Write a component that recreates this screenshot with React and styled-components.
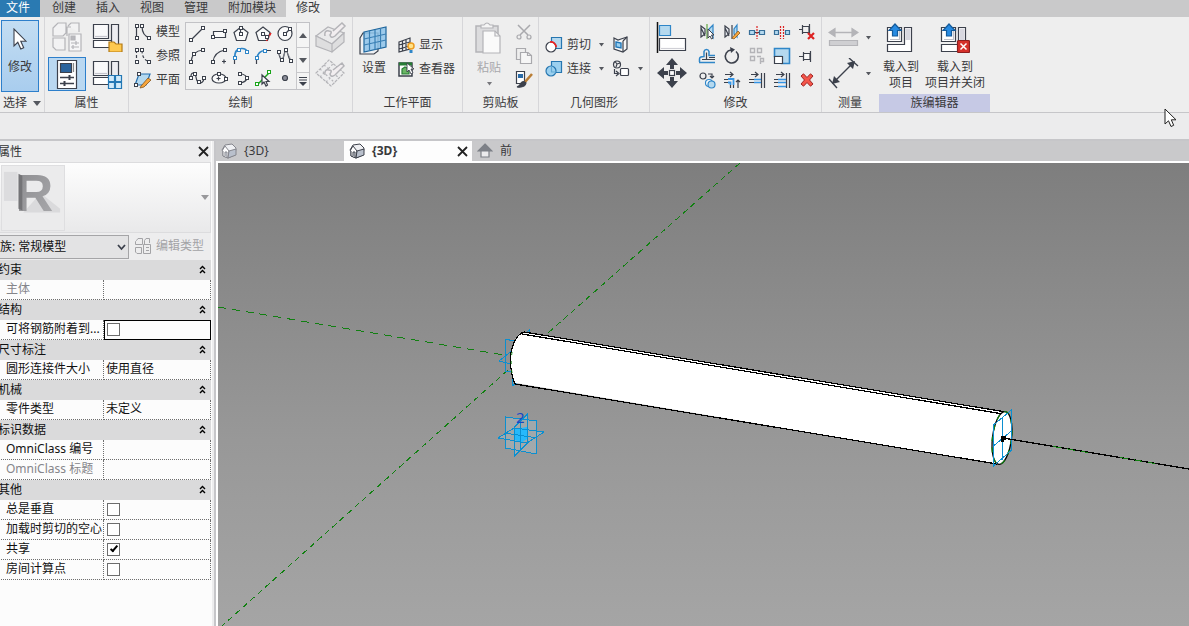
import React from "react";
import styled, { createGlobalStyle, css } from "styled-components";

const INK = "#3c414c";
const BLUE = "#2f86c8";
const SKY = "#b5d9ef";
const FADE = "#b4b4b8";

const GlobalStyle = createGlobalStyle`
  *, *::before, *::after { box-sizing: border-box; }
  body {
    margin: 0;
    overflow: hidden;
    background: #ececed;
    color: #3a3a3c;
    font: 12px/16px "Noto Sans", "Noto Sans CJK SC", sans-serif;
  }
  button, select, input { font: inherit; color: inherit; margin: 0; }
  button { border: 0; padding: 0; background: none; }
`;

const Shell = styled.div`
  height: 100vh;
  display: flex;
  flex-direction: column;
`;

const MenuBar = styled.nav`
  flex: none;
  display: flex;
  height: 17px;
  background: #c9c9ca;
`;

const MenuTab = styled.button`
  height: 17px;
  padding: 0 10px;
  line-height: 15px;
  padding-bottom: 2px;
  background: ${(p) => (p.$active ? "#eeeeee" : "transparent")};
  ${(p) =>
    p.$file &&
    css`
      padding-left: 6px;
      margin-right: 2px;
      background: #2a7ab2;
      color: #fff;
    `}
`;

const Ribbon = styled.div`
  flex: none;
  display: flex;
  height: 96px;
  background: #eeeeee;
  border-bottom: 1px solid #c6c6c9;
`;

const Panel = styled.section`
  flex: none;
  width: ${(p) => p.$width}px;
  display: flex;
  flex-direction: column;
  border-right: 1px solid ${(p) => (p.$last ? "transparent" : "#d6d6d9")};
`;

const PanelBody = styled.div`
  flex: 1;
  min-height: 0;
  display: flex;
  gap: ${(p) => p.$gap || 0}px;
  padding: ${(p) => p.$pad || "3px 4px 0"};
`;

const PanelTitle = styled.h2`
  margin: 0;
  height: 18px;
  display: flex;
  align-items: center;
  justify-content: center;
  gap: 6px;
  font-size: 12px;
  font-weight: 400;
  background: ${(p) => (p.$accent ? "#c6c9e5" : "transparent")};
`;

const Column = styled.div`
  display: flex;
  flex-direction: column;
  align-items: ${(p) => p.$align || "flex-start"};
  gap: ${(p) => p.$gap || 0}px;
  padding-top: ${(p) => p.$top || 0}px;
`;

const BigButton = styled.button`
  display: flex;
  flex-direction: column;
  align-items: center;
  gap: ${(p) => p.$gap || 0}px;
  white-space: nowrap;
  color: ${(p) => (p.disabled ? "#a8a8ac" : "inherit")};
`;

const SelectButton = styled(BigButton)`
  width: 38px;
  height: 72px;
  padding-top: 7px;
  gap: 9px;
  border: 1px solid #2d7fcb;
  background: linear-gradient(#c3ddf2, #a9cdee);
`;

const ToolGrid = styled.div`
  display: grid;
  align-content: start;
  grid-template-columns: repeat(${(p) => p.$cols}, ${(p) => p.$w}px);
  grid-auto-rows: ${(p) => p.$h}px;
  gap: ${(p) => p.$gap || 0}px;
`;

const Tool = styled.button`
  display: flex;
  align-items: center;
  justify-content: center;
  ${(p) =>
    p.$on &&
    css`
      border: 1px solid #2d7fcb;
      background: #bad8f1;
    `}
`;

const RowButton = styled.button`
  display: flex;
  align-items: center;
  gap: 4px;
  height: 24px;
  white-space: nowrap;
`;

const Gallery = styled.div`
  display: flex;
  height: 68px;
  border: 1px solid #c2c2c6;
  background: #f1f1f1;
`;

const GalleryScroll = styled.div`
  width: 13px;
  display: grid;
  grid-template-rows: 25px 25px 16px;
  border-left: 1px solid #c8c8cb;
  background: #f4f4f4;
  button {
    display: flex;
    align-items: center;
    justify-content: center;
    border-bottom: 1px solid #c8c8cb;
  }
  button:last-child { border-bottom: 0; }
`;

const OptionsBar = styled.div`
  flex: none;
  position: relative;
  height: 28px;
  background: #ececed;
  border-bottom: 2px solid #c6c6c9;
`;

const Pointer = styled.svg`
  position: absolute;
  right: 11px;
  top: -5px;
  width: 14px;
  height: 22px;
`;

const Workspace = styled.div`
  flex: 1;
  min-height: 0;
  display: flex;
`;

const Properties = styled.aside`
  flex: none;
  width: 216px;
  margin-left: -2px;
  padding-right: 1px;
  background: #fcfcfc;
  border-right: 2px solid #ededee;
  color: #111;
`;

const PropertiesHeader = styled.header`
  height: 21px;
  display: flex;
  align-items: center;
  justify-content: space-between;
  padding-right: 2px;
  background: #ededee;
  h2 { margin: 0; font-size: 12px; font-weight: 400; color: #333; }
  button { display: flex; }
`;

const TypeSelector = styled.button`
  width: 100%;
  height: 71px;
  display: flex;
  align-items: center;
  justify-content: space-between;
  padding: 0 1px 0 2px;
  border: 1px solid #dcdcde;
  background: linear-gradient(#fdfdfd, #e9e9ea);
`;

const Thumb = styled.svg`
  width: 64px;
  height: 66px;
  overflow: visible;
  background: #ebebec;
  border: 1px solid #dedee0;
`;

const TypeRow = styled.div`
  height: 27px;
  display: flex;
  align-items: center;
  gap: 6px;
  padding-top: 1px;
  background: #ededee;
`;

const FamilyBox = styled.label`
  position: relative;
  width: 131px;
  height: 24px;
  select {
    width: 100%;
    height: 24px;
    padding: 0 16px 0 1px;
    appearance: none;
    border: 1px solid #a5a5a7;
    border-radius: 0;
    background: #e3e3e4;
    color: #111;
  }
  svg { position: absolute; right: 3px; top: 9px; pointer-events: none; }
`;

const EditType = styled.button`
  display: flex;
  align-items: center;
  gap: 5px;
  padding-bottom: 2px;
  color: #a3a3a6;
`;

const Grid = styled.table`
  width: 100%;
  table-layout: fixed;
  border-collapse: separate;
  border-spacing: 0;
  line-height: 16px;
`;

const Category = styled.th`
  height: 20px;
  padding: 0;
  text-align: left;
  font-weight: 400;
  background: #dadadb;
  button {
    width: 100%;
    height: 20px;
    display: flex;
    align-items: center;
    justify-content: space-between;
    padding-right: 5px;
    padding-bottom: 1px;
  }
`;

const NameCell = styled.th`
  width: 106px;
  height: 20px;
  padding: 0 0 2px 8px;
  overflow: hidden;
  white-space: nowrap;
  text-align: left;
  font-weight: 400;
  color: ${(p) => (p.$muted ? "#85858a" : "#111")};
  border-right: 1px dotted #6e6e6e;
  border-bottom: 1px dotted #6e6e6e;
`;

const ValueCell = styled.td`
  height: 20px;
  padding: 0 2px 2px;
  border-right: 1px dotted #6e6e6e;
  border-bottom: 1px dotted #6e6e6e;
  ${(p) =>
    p.$focus &&
    css`
      border: 1px solid #000;
      padding: 0 1px 3px;
    `}
`;

const Check = styled.input`
  appearance: none;
  display: block;
  position: relative;
  width: 13px;
  height: 13px;
  margin-left: 1px;
  margin-top: 2px;
  border: 1px solid #6d6d6d;
  background: #fff;
  &:checked::after {
    content: "";
    position: absolute;
    left: 4px;
    top: 0;
    width: 4px;
    height: 8px;
    border: solid #000;
    border-width: 0 2px 2px 0;
    transform: rotate(40deg);
  }
`;

const ViewArea = styled.main`
  flex: 1;
  min-width: 0;
  display: flex;
  flex-direction: column;
  border-left: 2px solid #c6c6c9;
`;

const ViewTabs = styled.div`
  flex: none;
  display: flex;
  height: 20px;
  background: #c9c9cb;
`;

const ViewTab = styled.div`
  display: flex;
  align-items: center;
  justify-content: space-between;
  width: 128px;
  padding: 0 4px 0 5px;
  background: ${(p) => (p.$active ? "#fdfdfd" : "transparent")};
  font-weight: ${(p) => (p.$active ? 700 : 400)};
  button { display: flex; align-items: center; font-weight: inherit; gap: 7px; }
`;

const Canvas = styled.div`
  flex: 1;
  min-height: 0;
  border-top: 2px solid #fff;
  border-left: 2px solid #fff;
  background: linear-gradient(#7e7e7e, #989898 60%, #a5a5a5);
  svg { display: block; width: 100%; height: 100%; }
`;

/* ---------- icon helpers ---------- */

const Svg = ({ w = 18, h = w, children }) => (
  <svg width={w} height={h} viewBox={`0 0 ${w} ${h}`} fill="none" stroke={INK} strokeWidth="1.2" aria-hidden="true">
    {children}
  </svg>
);

const Nodes = ({ at, color = INK }) =>
  at.map(([x, y]) => (
    <rect key={`${x}-${y}`} x={Math.floor(x) - 1.5} y={Math.floor(y) - 1.5} width="3" height="3" fill="#fff" stroke={color} strokeWidth="1" />
  ));

const Caret = ({ color = "#55585f", up, w = 6 }) => (
  <svg width={w} height={w / 2 + 1} viewBox="0 0 8 5" preserveAspectRatio="none" aria-hidden="true">
    <path d={up ? "M0 5L4 0L8 5Z" : "M0 0H8L4 5Z"} fill={color} />
  </svg>
);

const Close = () => (
  <Svg w={11}>
    <path d="M1 1L10 10M10 1L1 10" stroke="#222" strokeWidth="1.8" />
  </Svg>
);

const DoubleUp = () => (
  <Svg w={7} h={9}>
    <path d="M1 4L3.500 1.500L6 4M1 8L3.500 5.500L6 8" stroke="#000" strokeWidth="1.4" />
  </Svg>
);

const arrowPath = "M1 1V16L4.500 12.800L7 18.500L9.700 17.300L7.300 11.800H12Z";

/* ---------- draw gallery ---------- */

const drawTools = [
  ["直线", <><path d="M3 15L15 3" /><Nodes at={[[3, 15], [15, 3]]} /></>],
  ["矩形", <><path d="M3.500 6.500H15.500V12.500H3.500Z" fill="#fafafa" /><Nodes at={[[3, 12], [15, 6]]} /></>],
  ["内接多边形", <><path d="M9 2L16 7.500L13.500 15.500H4.500L2 7.500Z" fill="#fafafa" /><path d="M8.500 3V9" /><Nodes at={[[9, 3], [9, 9]]} /></>],
  ["外接多边形", <><path d="M9 2L16 7.500L13.500 15.500H4.500L2 7.500Z" fill="#fafafa" /><path d="M9 9L13 11.500" /><path d="M17 8L12.500 16" stroke="#e32222" strokeWidth="1.5" strokeDasharray="3 1" /><Nodes at={[[9, 9], [13, 12]]} /></>],
  ["圆形", <><circle cx="9" cy="8.500" r="7" fill="#fafafa" /><path d="M9 9L14 4" /><Nodes at={[[9, 9], [14, 4]]} /></>],
  ["起点终点半径弧", <><path d="M3 15Q4 4 15 3" /><Nodes at={[[3, 15], [6, 7], [15, 3]]} /></>],
  ["圆心端点弧", <><path d="M3 15Q4 5 15 3" /><path d="M14 12.500V16.500M12 14.500H16" /><Nodes at={[[3, 15], [15, 3]]} /></>],
  ["相切端点弧", <><path d="M3 11C2 4 6 1.500 9 1.500Q14 1 15.500 5" stroke={BLUE} strokeWidth="1.600" /><path d="M2.500 13V17" /><Nodes color={BLUE} at={[[3, 11], [7, 3], [15, 5]]} /></>],
  ["圆角弧", <><path d="M3 11Q4 4 11 3.500" stroke={BLUE} strokeWidth="1.600" /><path d="M2.500 13V17M13 3.500H17" /><Nodes color={BLUE} at={[[3, 11], [11, 4]]} /></>],
  ["样条曲线", <><path d="M2 5C4 9 4 13 6 13C8 12 8 4 10 3C12 4 12 13 16 15" /><path d="M2 5L6 13L10 3L16 15" stroke="#8a8d96" strokeWidth=".8" /><Nodes at={[[3, 5], [6, 13], [10, 3], [15, 14]]} /></>],
  ["通过点的样条曲线", <><path d="M3 10C2 2 7 3 8 8C9 15 14 16 16 10" /><Nodes at={[[3, 9], [7, 5], [11, 13], [16, 9]]} /></>],
  ["椭圆", <><ellipse cx="9" cy="9.500" rx="7" ry="4.500" fill="#fafafa" /><path d="M8.500 7.500V11.500M6.500 9.500H10.500" /><Nodes at={[[9, 5], [16, 10]]} /></>],
  ["半椭圆", <><path d="M8 4.500Q15 6 15 9.500Q14 13 8 14" /><Nodes at={[[8, 5], [15, 9], [8, 14]]} /></>],
  ["拾取线", <><path d="M3 16L16 3" stroke="#1aa51a" strokeWidth="1.500" /><Nodes color="#1aa51a" at={[[3, 15], [15, 3]]} /><path d="M8 6V15L10 13L12 17L13.500 16L12 12.500H15Z" fill="#fff" /></>],
  ["点图元", <circle cx="9" cy="9" r="2.500" fill="#8c8e99" />],
];

/* ---------- modify tools ---------- */

const pin = "M1 9.500H6M5.500 5V14M6 6.500H12V12.500H6M12.500 4V15";
const modifyTools = [
  ["镜像-拾取轴", <><path d="M3 3V14L7 11V6ZM3 5L7 13" fill="#e7eaf0" /><path d="M9 1V16" stroke="#63a844" /><path d="M15 2V15L11 11V6Z" stroke={BLUE} fill={SKY} /><path d="M10 6V15L12 13L13.500 16L15 15L13.500 12H16Z" fill="#fff" strokeWidth="1" /></>],
  ["镜像-绘制轴", <><path d="M2 3V14L6 11V6ZM2 5L6 13" fill="#e7eaf0" /><path d="M9 2V16" /><path d="M14 2V14L11 11V6Z" stroke={BLUE} fill={SKY} /><path d="M9 15L15 8L17 10L11 16Z" fill="#f7a53a" stroke="#8b5a20" strokeWidth=".8" /></>],
  ["拆分图元", <><path d="M1.500 7.500H6.500V11.500H1.500ZM11.500 7.500H16.500V11.500H11.500Z" fill={SKY} stroke="#376e98" /><path d="M7 9.500H11" /><path d="M9 3V16" stroke="#d22" strokeDasharray="2 1" /></>],
  ["用间隙拆分", <><path d="M1.500 7.500H5.500V11.500H1.500ZM12.500 7.500H16.500V11.500H12.500Z" fill={SKY} stroke="#376e98" /><path d="M7.500 3V16M10.500 3V16" stroke="#d22" strokeDasharray="2 1" /></>],
  ["解锁", <><path d="M1 6.500H5M4.500 2V11M5 3.500H11V9.500H5M11.500 1V12" /><path d="M10 10L16 16M16 10L10 16" stroke="#d22" strokeWidth="2.200" /></>],
  ["偏移", <><path d="M1 15.500H17M1.500 15V12Q1.500 9.500 6 9.500V4.500Q6.500 2.500 8.500 2.500Q10.500 2.500 11 4.500V8.500H17" stroke={BLUE} strokeWidth="1.500" /><path d="M4 12.500H8.500V5.500M4 12.500H17M11 10.500H17" /></>],
  ["旋转", <><path d="M8 3A6.500 6.500 0 1 0 13 4.500" strokeWidth="1.600" /><path d="M7 0L12 2.500L8 6Z" fill={INK} stroke="none" /></>],
  ["阵列", <g stroke={FADE}><path d="M2.500 1.500H6.500V5.500H2.500ZM9.500 1.500H13.500V5.500H9.500ZM2.500 9.500H6.500V13.500H2.500ZM9 9.500H13M12.500 17V11.500H15.500V14.500H12.500" strokeWidth="1.400" /></g>],
  ["缩放", <><path d="M1.500 1.500H16.500V16.500H8.500V9.500H1.500Z" fill={SKY} stroke={BLUE} strokeWidth="1.600" /><path d="M1.500 9.500H9.500V16.500H1.500Z" fill="#fff" /></>],
  ["锁定", <path d={pin} fill="#f8f8f8" />],
  ["复制", <><circle cx="5" cy="5" r="3" /><path d="M10 3H14V6M12 5L14 7L16 5" /><circle cx="11" cy="12" r="3.500" fill="#fff" stroke={BLUE} /><circle cx="13.500" cy="13.500" r="3.500" fill={SKY} stroke={BLUE} /></>],
  ["修剪/延伸为角", <><path d="M2 3.500H10M7 1L10 3.500L7 6M1 8.500H5M1 11.500H5M7.500 14V17M10.500 14V17M15 17V9M13 11L15 9L17 11" /><path d="M5 8H10.500V14M5 11.500H7.500V14" stroke="#3595e6" strokeWidth="1.800" /></>],
  ["修剪/延伸单个图元", <><path d="M3 3.500H10M7 1L10 3.500L7 6M1 8.500H6M1 11.500H6M13.500 2V17M16.500 2V17" /><path d="M6 8.500H13M6 11.500H13" stroke="#3595e6" strokeWidth="1.500" /></>],
  ["修剪/延伸多个图元", <><path d="M3 3.500H11M8 1L11 3.500L8 6M1 8.500H5M1 11.500H5M1 15.500H5M13.500 2V17M16.500 2V17" /><path d="M5 8.500H13M5 11.500H13M5 15.500H13" stroke="#3595e6" strokeWidth="1.600" /></>],
  ["删除", <path d="M3 5L5.500 2.800L9 6.500L12.500 2.800L15 5L11.500 9L15 13L12.500 15.200L9 11.500L5.500 15.200L3 13L6.500 9Z" fill="#f4554a" stroke="#9f2525" strokeWidth="1" />],
];

/* ---------- larger icons ---------- */

const FamilyBase = () => (
  <>
    <path d="M1.500 2.500H16.500V16.500H1.500Z" fill="#f9f9fa" />
    <path d="M19.500 2.500H26.500V24.500H19.500Z" fill="#ededf1" />
    <path d="M1.500 18.500H19.500V25.500H1.500Z" fill="#fff" />
    <path d="M3 14.500H15" stroke="#c4c4cc" />
  </>
);

const propertyTools = [
  ["类型属性", <g stroke={FADE}><path d="M4 4L7 1H15V11L12 14H2V6ZM17 4L20 1H28V10M16 14V5H20M2 16H14V28H5L2 25Z" fill="#f2f2f3" /><path d="M18 12H30V29H18Z" fill="#f6f6f7" /><path d="M20 14H24V18H20Z" fill="#b8b8bd" /><path d="M20 21H28M20 25H28M25 19V23M22 23V27" /></g>],
  ["族类别", <><FamilyBase /><path d="M17 20H22L24 22H30V30H17Z" fill="#ffc94f" stroke="#b57b15" /></>],
  ["属性", <><path d="M6.500 1.500H25.500V29.500H6.500Z" fill="#fff" /><path d="M9.500 4.500H20.500V13.500H9.500Z" fill="#2b649d" /><path d="M22.500 4V13" stroke="#888" /><path d="M9 18.500H23M9 24.500H23" strokeWidth="1.400" /><path d="M18.500 16V21M13.500 22V27" strokeWidth="2" /></>, true],
  ["族类型", <><FamilyBase /><path d="M16.500 16.500H22.500V22.500H16.500ZM23.500 16.500H29.500V22.500H23.500ZM16.500 23.500H22.500V29.500H16.500ZM23.500 23.500H29.500V29.500H23.500Z" fill="#d1eafa" stroke="#2478b5" /></>],
];

const LoadIcon = ({ closing }) => (
  <Svg w={30} h={30}>
    <path d="M1.500 4.500H15.500V18.500H1.500Z" fill="#fff" />
    <path d="M18.500 4.500H25.500V28.500H1.500V21.500H18.500Z" fill="#fff" />
    <path d="M19.500 5.500H24.500V17H19.500Z" fill="#d8d8e0" stroke="none" />
    <path d="M4 16.500H13.500V8" stroke="#c0c0c8" />
    <path d="M9 1L15 7.500H11.500V13H6.500V7.500H3Z" fill="#278be2" stroke="#155b9b" />
    {closing && (
      <>
        <rect x="17.500" y="17.500" width="12" height="12" rx="1" fill="#d5302a" stroke="#8d1e1e" />
        <path d="M20.500 20.500L26.500 26.500M26.500 20.500L20.500 26.500" stroke="#fff" strokeWidth="1.500" />
      </>
    )}
  </Svg>
);

const House = ({ faded }) => (
  <Svg w={16}>
    <g stroke={faded ? "#85868d" : "#3e424c"} strokeWidth="1">
      <path d="M1 7L4 2L11 1L15 5L14 12L7 15L2 13V7Z" fill="#eff0f3" />
      <path d="M1 8L4 3L8 8L7 15L2 13V8" fill="#fff" />
      <path d="M8 8L15 6V12L7 15Z" fill="#b9c0cc" />
      <path d="M4 13V9H6V14" fill="#d8dce3" />
    </g>
  </Svg>
);

const TypeIcon = () => (
  <Svg w={16}>
    <g stroke="#a3a3a6" strokeWidth="1">
      <path d="M1.500 2.500L3 .5H7.500V6.500H.5V3.500ZM9.500 6.500V2.500L11 .5H14.500V5M.5 9.500H6.500V15.500H2L.5 14Z" />
      <path d="M8.500 6.500H15.500V15.500H8.500ZM11 9.500H14M11 12.500H14" />
    </g>
  </Svg>
);

/* ---------- property data ---------- */

const groups = [
  ["约束", [{ name: "主体", muted: true }]],
  ["结构", [{ name: "可将钢筋附着到...", check: false, focus: true }]],
  ["尺寸标注", [{ name: "圆形连接件大小", value: "使用直径" }]],
  ["机械", [{ name: "零件类型", value: "未定义" }]],
  ["标识数据", [{ name: "OmniClass 编号" }, { name: "OmniClass 标题", muted: true }]],
  ["其他", [
    { name: "总是垂直", check: false },
    { name: "加载时剪切的空心", check: false },
    { name: "共享", check: true },
    { name: "房间计算点", check: false },
  ]],
];

function RibbonPanels() {
  return (
    <Ribbon>
      <Panel $width={45}>
        <PanelBody $pad="3px 0 0 1px">
          <SelectButton>
            <Svg w={14} h={22}><path d="M1 1V18L4.800 14.300L7.800 21L10.700 19.700L7.800 13.200H13Z" fill="#fff" strokeWidth="1.100" /></Svg>
            修改
          </SelectButton>
        </PanelBody>
        <PanelTitle>选择<Caret w={8} /></PanelTitle>
      </Panel>

      <Panel $width={84}>
        <PanelBody $pad="3px 0 0 3px">
          <ToolGrid $cols={2} $w={38} $h={34} $gap={3}>
            {propertyTools.map(([name, art, on]) => (
              <Tool key={name} aria-label={name} $on={on}><Svg w={32} h={30}>{art}</Svg></Tool>
            ))}
          </ToolGrid>
        </PanelBody>
        <PanelTitle>属性</PanelTitle>
      </Panel>

      <Panel $width={224}>
        <PanelBody $pad="3px 0 0 5px" $gap={5}>
          <Column>
            <RowButton>
              <Svg><path d="M2.500 3V15M8 3Q8 13 16 15" /><Nodes at={[[3, 3], [3, 15], [8, 3], [15, 15]]} /></Svg>模型
            </RowButton>
            <RowButton>
              <Svg><path d="M2.500 3V15M8 3Q8 13 16 15" strokeDasharray="3 2" /><Nodes at={[[3, 3], [3, 15], [8, 3], [15, 15]]} /></Svg>参照
            </RowButton>
            <RowButton>
              <Svg><path d="M5 3H16L12 14H1Z" fill={SKY} stroke="#246fae" /><path d="M7 15L14 7L17 9L10 16L6 17Z" fill="#f8a63c" stroke="#85571f" strokeWidth=".8" /><Nodes at={[[5, 3], [2, 14]]} /></Svg>平面
            </RowButton>
          </Column>
          <Column $top={2}>
            <Gallery>
              <ToolGrid $cols={5} $w={22} $h={22}>
                {drawTools.map(([name, art]) => (
                  <Tool key={name} aria-label={name}><Svg>{art}</Svg></Tool>
                ))}
              </ToolGrid>
              <GalleryScroll>
                <button aria-label="向上"><Caret up w={8} /></button>
                <button aria-label="向下"><Caret w={8} /></button>
                <button aria-label="更多"><Svg w={8} h={9}><path d="M0 .5H8M0 3H8" /><path d="M0 5H8L4 9Z" fill={INK} stroke="none" /></Svg></button>
              </GalleryScroll>
            </Gallery>
          </Column>
          <Column $top={2} $gap={4}>
            <Tool aria-label="拾取面">
              <Svg w={32}><g stroke={FADE}><path d="M1 14L13 5L29 11L17 22Z" fill="#eaeaeb" /><path d="M1 14V24L17 30V22ZM17 22L29 11V20L17 30Z" fill="#dededf" /><path d="M10 14Q9 8 14 9Q18 9 15 13Q16 17 20 14L30 4L27 1L18 9" fill="#f2eef0" strokeWidth="1.500" /></g></Svg>
            </Tool>
            <Tool aria-label="拾取工作平面">
              <Svg w={32}><g stroke={FADE}><path d="M1 15L14 2L29 15L16 28Z" fill="#ededee" strokeDasharray="3 1" /><path d="M5 11L20 25M9 7L24 20M5 19L18 6M11 24L25 11" strokeDasharray="2 2" /><path d="M10 17Q9 11 14 12Q18 12 15 16Q16 20 20 17L29 8L27 5L18 12" fill="#f2eef0" strokeWidth="1.500" /></g></Svg>
            </Tool>
          </Column>
        </PanelBody>
        <PanelTitle>绘制</PanelTitle>
      </Panel>

      <Panel $width={110}>
        <PanelBody $pad="7px 0 0 6px" $gap={9}>
          <BigButton $gap={4}>
            <Svg w={30} h={32}>
              <path d="M1 14L4 9H19V27L15 30H1Z" fill="#eef0f3" />
              <path d="M5 8L27 3V23L5 28Z" fill="#8dc3ea" fillOpacity=".85" stroke="#1d659c" />
              <path d="M10.500 7V27M16 6V26M21.500 5V25M5 15L27 10M5 21L27 16" stroke="#397fb4" />
            </Svg>
            设置
          </BigButton>
          <Column $top={9}>
            <RowButton>
              <Svg w={17}><path d="M1 5L12 1V12L1 15ZM4.500 4V14M8 3V13M1 8L12 5M1 12L12 9" /><circle cx="13" cy="9" r="3" fill="#ffe38a" stroke="#ee9c20" strokeWidth="1.500" /><path d="M11.500 13H14.500V16H11.500Z" fill={BLUE} stroke="none" /></Svg>显示
            </RowButton>
            <RowButton>
              <Svg w={17}><path d="M1 2H14V15H1Z" fill="#fff" strokeWidth="1.500" /><path d="M1 3H14" stroke="#277d35" strokeWidth="3" /><path d="M4 8L7 6L11 8V13H4Z" fill="#6bb665" stroke="#277d35" /><path d="M9 2V11L11 9L13 13L15 12L13 8H16Z" fill="#fff" strokeWidth=".9" /></Svg>查看器
            </RowButton>
          </Column>
        </PanelBody>
        <PanelTitle>工作平面</PanelTitle>
      </Panel>

      <Panel $width={76}>
        <PanelBody $pad="3px 0 0 12px" $gap={12}>
          <BigButton $gap={6} disabled>
            <Svg w={28} h={34}><g stroke={FADE}><path d="M1 6H23V32H1Z" fill="#dcdcde" strokeWidth="1.500" /><path d="M6 8V5H9Q12 1 15 5H18V8Z" fill="#f5f5f5" /><path d="M8 11H20L25 16V33H8Z" fill="#fafafa" /><path d="M20 11V16H25" /></g></Svg>
            粘贴
            <Caret color="#77777c" w={5} />
          </BigButton>
          <ToolGrid $cols={1} $w={18} $h={24}>
            <Tool aria-label="剪切"><Svg><g stroke="#a9a9ad"><path d="M3 2L13 12M15 2L5 12" strokeWidth="1.500" /><circle cx="4" cy="14" r="2" /><circle cx="14" cy="14" r="2" /></g></Svg></Tool>
            <Tool aria-label="复制"><Svg><g stroke="#a9a9ad"><path d="M1.500 1.500H10.500V12.500H1.500Z" /><path d="M5.500 5.500H13L16.500 8.500V16.500H5.500Z" fill="#f6f6f6" /><path d="M12.500 5V8.500H16" /></g></Svg></Tool>
            <Tool aria-label="匹配类型"><Svg><path d="M1.500 .5H9.500V12.500H1.500Z" fill="#fff" /><path d="M3 3H8V7H3Z" fill="#2a6ba8" stroke="none" /><path d="M10 11L17 3" stroke="#ba7e36" strokeWidth="2.500" /><path d="M2 16Q5 15 6 12Q8 9 11 12Q10 17 2 16Z" fill={INK} /></Svg></Tool>
          </ToolGrid>
        </PanelBody>
        <PanelTitle>剪贴板</PanelTitle>
      </Panel>

      <Panel $width={111}>
        <PanelBody $pad="16px 0 0 6px" $gap={8}>
          <Column>
            <RowButton><Svg w={18}><path d="M6.500 1.500H16.500V12.500H6.500Z" fill={SKY} stroke="#2676b0" /><circle cx="6" cy="11" r="5" fill="#fff" /><path d="M5 6A5 5 0 0 1 11 11" stroke="#e22" strokeWidth="1.600" /></Svg>剪切</RowButton>
            <RowButton><Svg w={18}><path d="M6.500 1.500H16.500V12.500H6.500Z" fill="#9bd0ef" stroke="#2676b0" /><circle cx="6" cy="11" r="5" fill="#9bd0ef" stroke="#2676b0" /><path d="M6.500 6V12H11" stroke="#62a9d4" /></Svg>连接</RowButton>
          </Column>
          <ToolGrid $cols={1} $w={5} $h={24}>
            <Tool aria-label="剪切选项"><Caret w={5} /></Tool>
            <Tool aria-label="连接选项"><Caret w={5} /></Tool>
          </ToolGrid>
          <ToolGrid $cols={1} $w={18} $h={24}>
            <Tool aria-label="拆分面"><Svg><path d="M2 2L6 4L9 3L15 1V13L11 16L2 13Z" fill="#f7f7f7" /><path d="M11 5V16M11 5L15 1" /><path d="M4 6L9 7V12L4 11Z" fill="#9bd0ef" stroke="#2176b7" strokeWidth="1.400" /></Svg></Tool>
            <Tool aria-label="填色"><Svg><circle cx="5" cy="4.500" r="3.500" /><path d="M5 4L3 1.500M5 4L8 3M5 4L4 7" /><path d="M2.500 9V13.500H6M4 11L7 13.500L4 16" /><rect x="8.500" y="8.500" width="8" height="7" rx="1" fill="#fff" /></Svg></Tool>
          </ToolGrid>
          <Column $top={34}><Caret w={5} /></Column>
        </PanelBody>
        <PanelTitle>几何图形</PanelTitle>
      </Panel>

      <Panel $width={172}>
        <PanelBody $pad="3px 0 0 6px" $gap={6}>
          <Column $top={1} $gap={3}>
            <Tool aria-label="对齐">
              <Svg w={32} h={33}><path d="M1.500 1V32" stroke="#111" strokeWidth="1.500" /><path d="M3.500 4.500H14.500V14.500H3.500Z" fill={SKY} stroke={BLUE} /><path d="M3.500 17.500H29.500V29.500H3.500Z" fill="#fff" /><path d="M5 27.500H28" stroke="#d0d0d6" /></Svg>
            </Tool>
            <Tool aria-label="移动">
              <Svg w={32}><path d="M16 1L22 8H18V12H14V8H10ZM31 16L24 10V14H20V18H24V22ZM16 31L10 24H14V20H18V24H22ZM1 16L8 22V18H12V14H8V10Z" fill={INK} stroke="none" /><rect x="13.500" y="13.500" width="5" height="5" fill="#fff" /></Svg>
            </Tool>
          </Column>
          <ToolGrid $cols={5} $w={25} $h={24}>
            {modifyTools.map(([name, art]) => (
              <Tool key={name} aria-label={name}><Svg>{art}</Svg></Tool>
            ))}
          </ToolGrid>
        </PanelBody>
        <PanelTitle>修改</PanelTitle>
      </Panel>

      <Panel $width={57} $last>
        <PanelBody $pad="5px 0 0 6px" $gap={7}>
          <Column $gap={4}>
            <Tool aria-label="对齐尺寸"><Svg w={31} h={32}><g stroke={FADE}><path d="M2 10.500H29" strokeWidth="1.500" /><path d="M1 10.500L7 6.500V14.500ZM30 10.500L24 6.500V14.500Z" fill={FADE} /><path d="M1.500 18.500H29.500V23.500H1.500Z" fill="#cfcfd2" /></g></Svg></Tool>
            <Tool aria-label="测量"><Svg w={31} h={32}><path d="M5 25L26 4M1 21L9 30M21 0L30 8" strokeWidth="1.400" /><path d="M4 26L6 18L12 24ZM27 3L19 5L25 11Z" fill={INK} stroke="none" /></Svg></Tool>
          </Column>
          <Column $top={14} $gap={32}>
            <Caret w={5} /><Caret w={5} />
          </Column>
        </PanelBody>
        <PanelTitle>测量</PanelTitle>
      </Panel>

      <Panel $width={112} $last>
        <PanelBody $pad="6px 1px 0 4px" $gap={6}>
          <BigButton $gap={6}><LoadIcon /><span>载入到<br />项目</span></BigButton>
          <BigButton $gap={6}><LoadIcon closing /><span>载入到<br />项目并关闭</span></BigButton>
        </PanelBody>
        <PanelTitle $accent>族编辑器</PanelTitle>
      </Panel>
    </Ribbon>
  );
}

function PropertyRow({ row }) {
  const isCheck = row.check !== undefined;
  return (
    <tr>
      <NameCell scope="row" $muted={row.muted}>
        {isCheck ? <label htmlFor={row.name}>{row.name}</label> : row.name}
      </NameCell>
      <ValueCell $focus={row.focus}>
        {isCheck ? <Check id={row.name} type="checkbox" defaultChecked={row.check} /> : row.value}
      </ValueCell>
    </tr>
  );
}

function PropertiesPalette() {
  return (
    <Properties>
      <PropertiesHeader>
        <h2>属性</h2>
        <button aria-label="关闭"><Close /></button>
      </PropertiesHeader>
      <TypeSelector aria-label="类型选择器">
        <Thumb viewBox="0 0 64 66" aria-hidden="true">
          <defs>
            <linearGradient id="rFill" x1="0" y1="0" x2="1" y2="1">
              <stop offset="0" stopColor="#8b8b8e" />
              <stop offset="1" stopColor="#a9a9ac" />
            </linearGradient>
          </defs>
          <path d="M2 6H16V36H2Z" fill="#dcdcde" />
          <path d="M22 48L40 28L60 44V48Z" fill="#dadadc" />
          <text x="14" y="46" fontFamily="Liberation Sans, sans-serif" fontWeight="700" fontSize="54" fill="url(#rFill)" stroke="none">R</text>
          <path d="M17 8L21 10V46L17 44Z" fill="#747477" />
        </Thumb>
        <Caret color="#98989b" w={8} />
      </TypeSelector>
      <TypeRow>
        <FamilyBox>
          <select aria-label="族"><option>族: 常规模型</option></select>
          <Svg w={9} h={7}><path d="M1 1L4.500 5L8 1" strokeWidth="1.800" /></Svg>
        </FamilyBox>
        <EditType disabled><TypeIcon />编辑类型</EditType>
      </TypeRow>
      <Grid>
        <colgroup><col width="106" /><col /></colgroup>
        {groups.map(([title, rows]) => (
          <tbody key={title}>
            <tr><Category colSpan={2}><button>{title}<DoubleUp /></button></Category></tr>
            {rows.map((row) => <PropertyRow key={row.name} row={row} />)}
          </tbody>
        ))}
      </Grid>
    </Properties>
  );
}

function Scene() {
  return (
    <svg viewBox="218 163 971 463" preserveAspectRatio="xMinYMin slice" fill="none" role="img" aria-label="三维视图">
      <g stroke="#118011" strokeWidth="1" strokeDasharray="6 4" shapeRendering="crispEdges">
        <path d="M740 163L548 333" />
        <path d="M508 370L222 626" />
        <path d="M218 307L504 355" strokeDasharray="8 6" />
      </g>
      <g stroke="#0b8fd0" shapeRendering="crispEdges">
        <path d="M514 341L505 339V371L511 372M499 361L513 350M499 361L511 364M512 367V386L518 382M525 334L529 330V334" />
      </g>
      <path d="M522 332L1006 412Q1014 418 1011 440Q1007 462 997 464L515 383Q509 370 511 352Q515 335 522 332Z" fill="#fff" />
      <g stroke="#000" strokeWidth="1.200" shapeRendering="crispEdges">
        <path d="M1006 412L524 332Q515 335 511 352Q509 370 515 384L997 464" />
        <path d="M522 334L1003 414" />
      </g>
      <ellipse cx="1002" cy="438" rx="9.500" ry="26.500" transform="rotate(7 1002 438)" fill="#fff" stroke="#000" strokeWidth="1.300" />
      <ellipse cx="1002" cy="438" rx="9.500" ry="26.500" transform="rotate(7 1002 438)" stroke="#118011" strokeWidth="1.300" strokeDasharray="5 6" />
      <path d="M512 352Q510 366 513 378" stroke="#118011" strokeDasharray="3 6" />
      <path d="M993.500 425L1011.500 410V450L993.500 466ZM1002.500 417V460M993.500 446L1011.500 431" stroke="#0b8fd0" shapeRendering="crispEdges" />
      <g shapeRendering="crispEdges">
        <path d="M1003 438L1189 469" stroke="#000" strokeWidth="1.200" />
        <path d="M1053 446.500L1088 452.500M1120 457.500L1158 464" stroke="#118011" strokeDasharray="8 6" />
        <path d="M1001 436H1006V440H1004V442H1001Z" fill="#000" />
      </g>
      <path d="M505 417L537 421V454L505 448ZM514 427L527 414V443L514 456ZM498 438L514 427L544 432L527 443Z" fill="#c5e6f5" fillOpacity=".22" />
      <path d="M515 429L527 427V439L521 443L515 440Z" fill="#27b9fb" />
      <g stroke="#0b8fd0" strokeWidth="1" shapeRendering="crispEdges">
        <path d="M505.500 417L536.500 421V454L505.500 448Z" />
        <path d="M514.500 427L527.500 414V443L514.500 456Z" />
        <path d="M498 438L514 428L544 432L527 443Z" />
        <path d="M520.500 419V451M505 433L537 438" />
      </g>
      <text x="516" y="423" fill="#1646c4" fontFamily="Noto Sans, sans-serif" fontSize="15">2</text>
    </svg>
  );
}

export default function App() {
  return (
    <>
      <GlobalStyle />
      <Shell>
        <MenuBar>
          <MenuTab $file>文件</MenuTab>
          {["创建", "插入", "视图", "管理", "附加模块"].map((t) => <MenuTab key={t}>{t}</MenuTab>)}
          <MenuTab $active>修改</MenuTab>
        </MenuBar>
        <RibbonPanels />
        <OptionsBar>
          <Pointer viewBox="0 0 14 22" aria-hidden="true">
            <path d={arrowPath} fill="#fff" stroke="#222" strokeWidth="1" />
          </Pointer>
        </OptionsBar>
        <Workspace>
          <PropertiesPalette />
          <ViewArea>
            <ViewTabs>
              <ViewTab><button><House faded />{"{3D}"}</button></ViewTab>
              <ViewTab $active>
                <button><House />{"{3D}"}</button>
                <button aria-label="关闭视图"><Close /></button>
              </ViewTab>
              <ViewTab>
                <button>
                  <Svg w={16}><path d="M8 1L15 8H1Z" fill="#7d8087" stroke="#7d8087" /><path d="M4 8H12V14H4Z" fill="#ebebed" stroke="#7d8087" /></Svg>
                  前
                </button>
              </ViewTab>
            </ViewTabs>
            <Canvas><Scene /></Canvas>
          </ViewArea>
        </Workspace>
      </Shell>
    </>
  );
}
